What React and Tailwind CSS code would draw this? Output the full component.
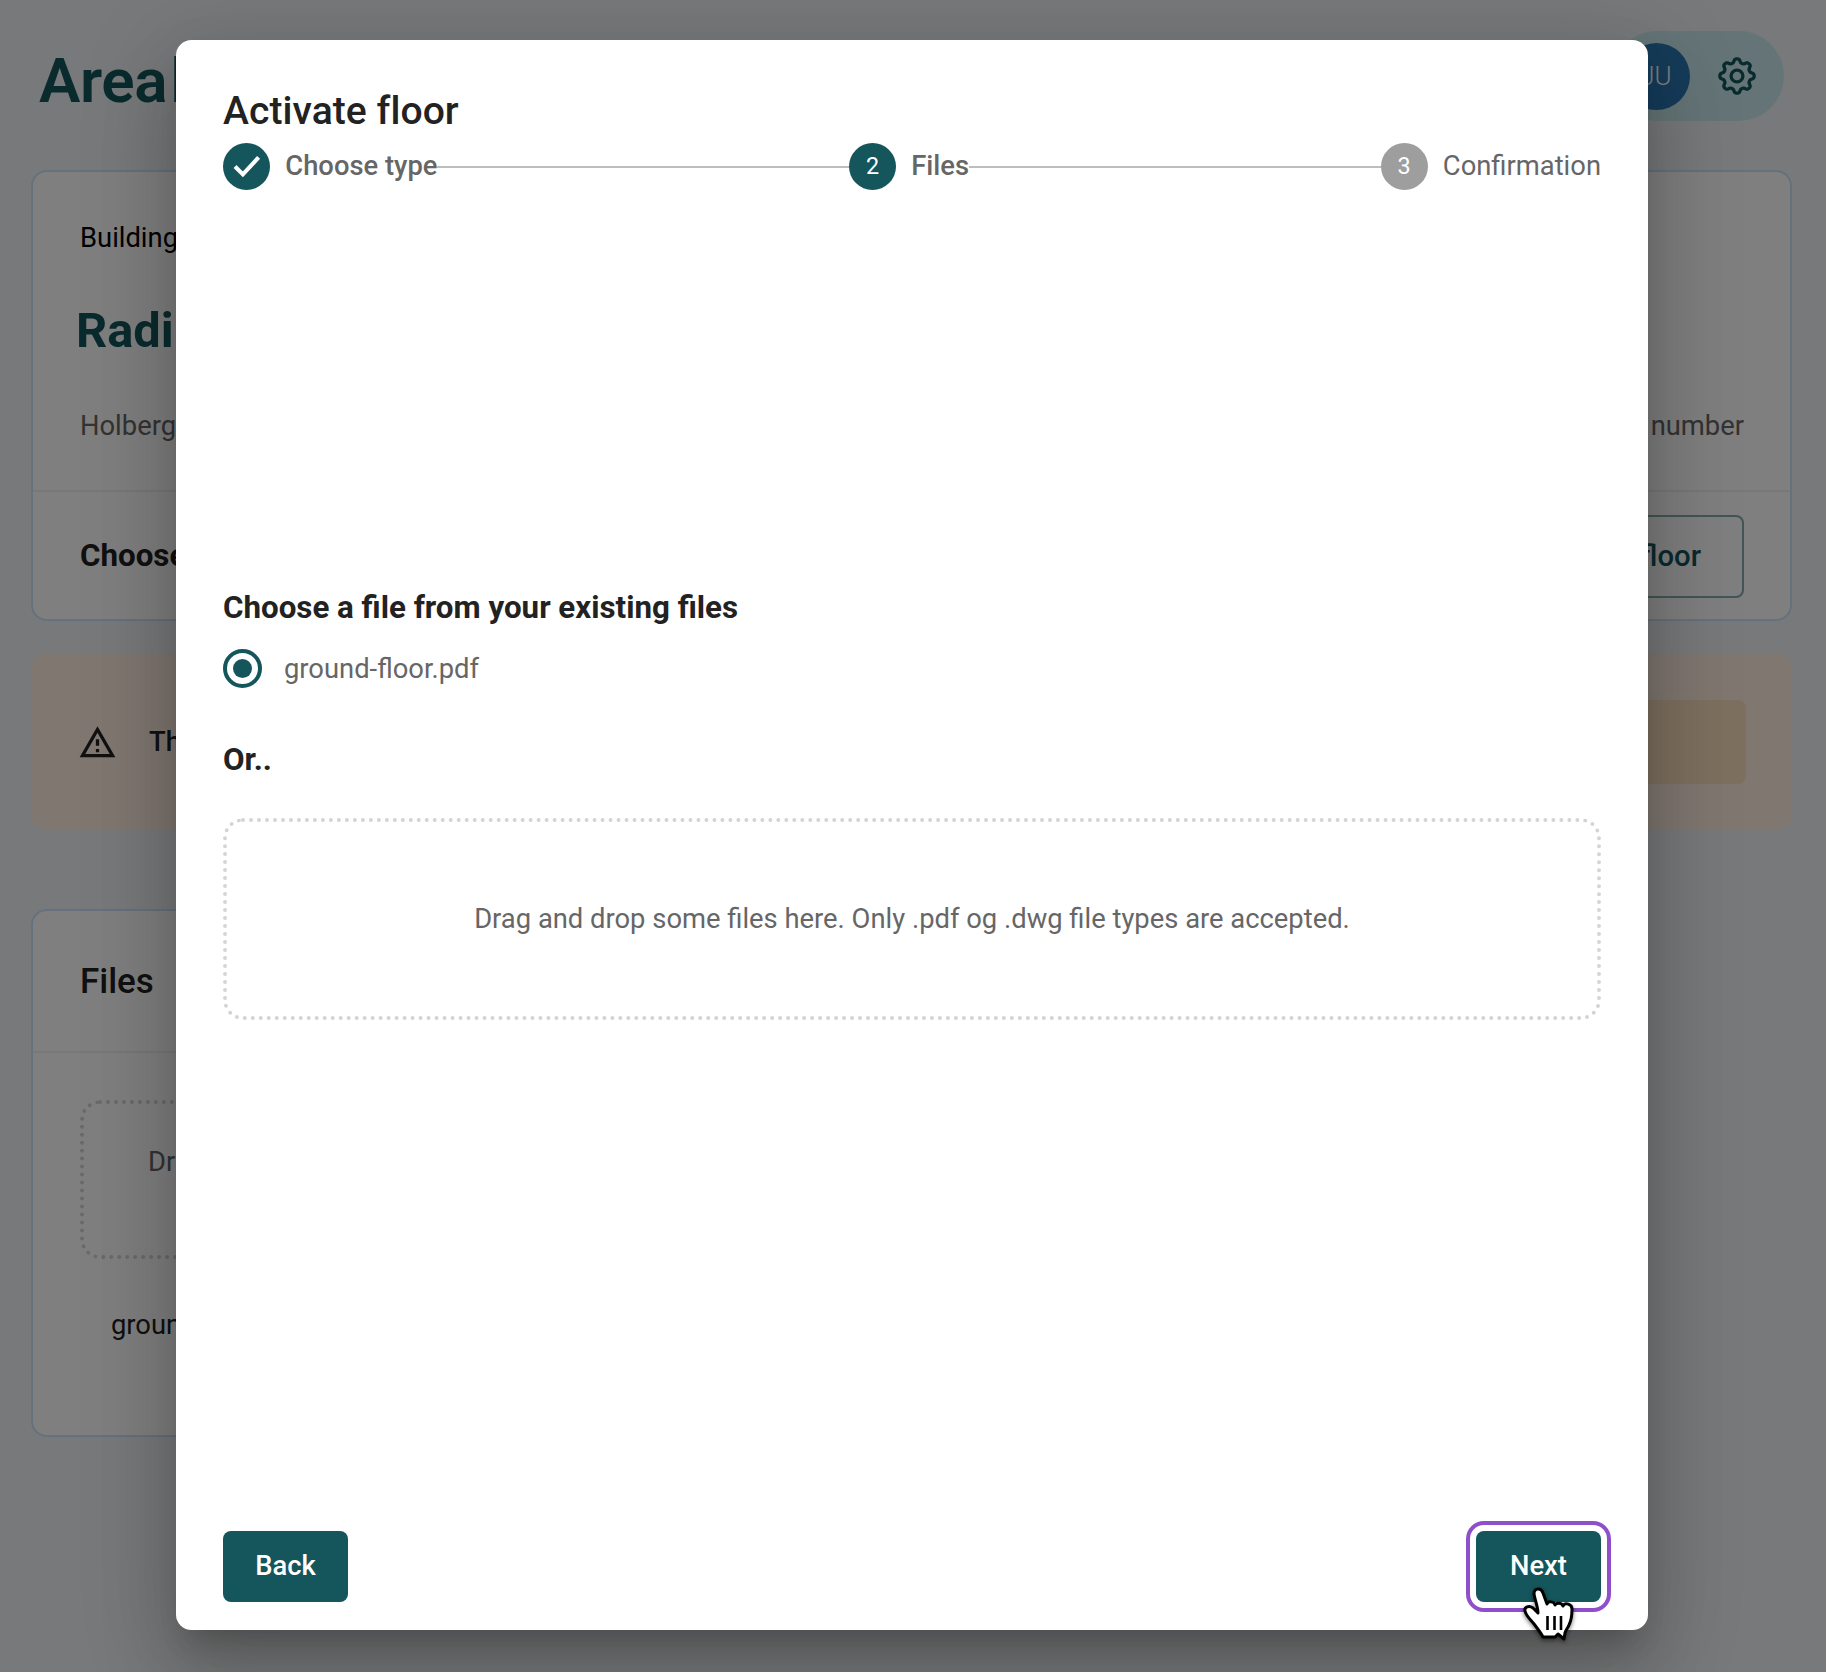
import React from "react";

function Step({ children, label, className, strong }) {
  return (
    <div className="flex items-center">
      <div className={"flex h-[47px] w-[47px] items-center justify-center rounded-full text-[23.4px] text-white " + className}>
        {children}
      </div>
      <span className={"ml-[15.3px] pt-px text-[27.37px] " + (strong ? "font-medium text-[#666]" : "font-normal text-[#666]")}>{label}</span>
    </div>
  );
}

// Outline of an eight-lobed cog centred on the origin.
const cogPath =
  Array.from({ length: 160 }, (_, i) => {
    const angle = (i / 160) * Math.PI * 2;
    const r = 15.3 + 2 * Math.tanh(1.6 * Math.cos(8 * angle));
    return (i ? "L" : "M") + (r * Math.cos(angle)).toFixed(2) + " " + (r * Math.sin(angle)).toFixed(2);
  }).join("") + "Z";

function Gear() {
  return (
    <svg viewBox="-20 -20 40 40" className="h-[40px] w-[40px]" fill="none" stroke="#14565b" strokeWidth="3.3" strokeLinejoin="round">
      <circle r="5.9" />
      <path d={cogPath} />
    </svg>
  );
}

function Page() {
  return (
    <div className="flex h-full flex-col pr-[34px] pl-[31px]">
      <header className="flex h-[170px] items-start justify-between">
        <div className="ml-[8px] mt-[44px] text-[62px] leading-[73px] font-semibold tracking-[-0.4px] text-[#14565b]">Area<span className="ml-[3px]">l</span></div>
        <div className="mt-[31px] mr-[8.5px] flex h-[90px] w-[172px] items-center justify-end rounded-full bg-[#cbebef] pr-[27px]">
          <div className="flex h-[67px] w-[67px] items-center justify-center rounded-full bg-[#2a79b4] text-[26px] font-light text-white">JU</div>
          <div className="ml-[27px]"><Gear /></div>
        </div>
      </header>
      <section className="flex h-[451px] flex-col rounded-[16px] border-2 border-[#cbe2fa] bg-white">
        <div className="h-[320px] shrink-0 border-b-2 border-[#f2f0ee] pr-[46px] pl-[47px]">
          <div className="pt-[47px] text-[27.37px] leading-[39px] text-black">Building</div>
          <div className="-ml-[4px] mt-[44px] text-[48.8px] leading-[58px] font-bold text-[#14565b]">Radi</div>
          <div className="mt-[47px] flex justify-between text-[27.37px] leading-[39px] text-[#666]">
            <span>Holberg</span><span>number</span>
          </div>
        </div>
        <div className="flex grow items-center justify-between pt-[2px] pr-[46px] pl-[47px]">
          <span className="text-[31.3px] font-bold text-[#222]">Choose</span>
          <div className="flex h-[83px] w-[280px] items-center justify-end rounded-[8px] border-2 border-[#14565b]/50 pr-[41px] text-[29.3px] font-medium text-[#14565b]">floor</div>
        </div>
      </section>
      <section className="mt-[32px] flex h-[177px] items-center rounded-[16px] bg-[#ffeee0] pl-[47px] pr-[46px]">
        <svg viewBox="0 0 24 24" className="mt-[1px] h-[39px] w-[39px]" fill="#222"><path d="M12 5.99 19.53 19H4.47L12 5.99M12 2 1 21h22L12 2zm1 14h-2v2h2v-2zm0-6h-2v4h2v-4z" /></svg>
        <span className="ml-[32px] mt-[2px] text-[27.37px] font-medium text-[#222]">Th</span>
        <div className="ml-auto h-[84px] w-[210px] rounded-[8px] bg-[#fbe0bf]" />
      </section>
      <section className="mt-[79px] h-[528px] w-[1000px] rounded-[16px] border-2 border-[#cbe2fa] bg-white">
        <div className="h-[142px] border-b-2 border-[#f2f0ee] pl-[47px] pt-[47px] text-[35px] leading-[47px] font-medium text-[#222]">Files</div>
        <div className="ml-[47px] mt-[47px] h-[159px] w-[860px] rounded-[20px] border-4 border-dotted border-[#d4d4d4] pl-[64px] pt-[39px] text-[27.37px] leading-[39px] text-[#666]">Dr</div>
        <div className="ml-[78px] mt-[47px] text-[27.37px] leading-[39px] text-[#222]">groun</div>
      </section>
    </div>
  );
}

function Pointer() {
  return (
    <svg viewBox="0 0 54 60" className="absolute left-[47px] top-[56px] h-[60px] w-[54px] overflow-visible drop-shadow-[0_2px_2px_rgba(0,0,0,0.5)]">
      <path d="M11 7c0-6 7-7 9-1l4 11c1-3 7-3 8 1 2-3 7-2 8 1 2-4 9-2 9 3 0 7-1 12-3 16-1 3-4 6-4 8l-1 6-6-5-3 3H20c-2-4-6-9-9-13-3-4-8-8-9-13-1-4 4-6 8-3l5 5c0-6-3-13-4-19z" fill="#fff" stroke="#000" strokeWidth="3" strokeLinejoin="round" />
      <path d="M24.500 29v14M31.500 29v14M38 29v14" stroke="#000" strokeWidth="2.6" />
    </svg>
  );
}

export default function App() {
  return (
    <div className="relative h-[1672px] w-[1826px] overflow-hidden bg-[#f0f2f5] font-[Roboto,sans-serif]">
      <Page />
      <div className="absolute inset-0 bg-black/50">
        <main className="ml-[176px] mt-[40px] flex h-[1590px] w-[1472px] flex-col rounded-[15.6px] bg-white px-[47px] shadow-[0_21.5px_29px_-13.7px_rgba(0,0,0,0.2),0_47px_74px_6px_rgba(0,0,0,0.14),0_17.6px_90px_15.6px_rgba(0,0,0,0.12)]">
          <h1 className="mt-[46px] text-[39.1px] leading-[50px] font-medium tracking-[0.05px] text-[#222]">Activate floor</h1>
          <div className="mt-[7px] flex items-center">
            <Step className="bg-[#14565b]" strong label="Choose type">
              <svg viewBox="0 0 24 24" className="h-[29px] w-[29px]" fill="none" stroke="#fff" strokeWidth="3.4"><path d="M2.5 12 9 18.5 22 4.5" /></svg>
            </Step>
            <div className="h-[2px] grow bg-[#bdbdbd]" />
            <Step className="bg-[#14565b]" strong label="Files">2</Step>
            <div className="h-[2px] grow bg-[#bdbdbd]" />
            <Step className="bg-[#9e9e9e]" label="Confirmation">3</Step>
          </div>
          <h2 className="mt-[394px] text-[31.3px] leading-[47px] font-bold text-[#222]">Choose a file from your existing files</h2>
          <div className="mt-[18px] flex items-center text-[27.37px] leading-[39px] text-[#666]">
            <div className="mr-[22px] flex h-[39px] w-[39px] items-center justify-center rounded-full border-4 border-[#14565b]">
              <div className="h-[19.5px] w-[19.5px] rounded-full bg-[#14565b]" />
            </div>
            <span className="relative top-px">ground-floor.pdf</span>
          </div>
          <h2 className="mt-[48px] text-[31.3px] leading-[47px] font-bold text-[#222]">Or..</h2>
          <div className="mt-[35px] flex h-[202px] items-center justify-center rounded-[20px] border-4 border-dotted border-[#d4d4d4] pt-[2px] text-[27.37px] text-[#666]">
            Drag and drop some files here. Only .pdf og .dwg file types are accepted.
          </div>
          <div className="mt-auto mb-[28px] flex justify-between">
            <button className="h-[71px] w-[125px] rounded-[8px] bg-[#14565b] pt-px text-[27.37px] font-medium text-white">Back</button>
            <button className="relative h-[71px] w-[125px] rounded-[8px] bg-[#14565b] pt-px text-[27.37px] font-medium text-white outline-4 outline-offset-[6px] outline-[#8f4fcb]">
              Next
              <Pointer />
            </button>
          </div>
        </main>
      </div>
    </div>
  );
}
